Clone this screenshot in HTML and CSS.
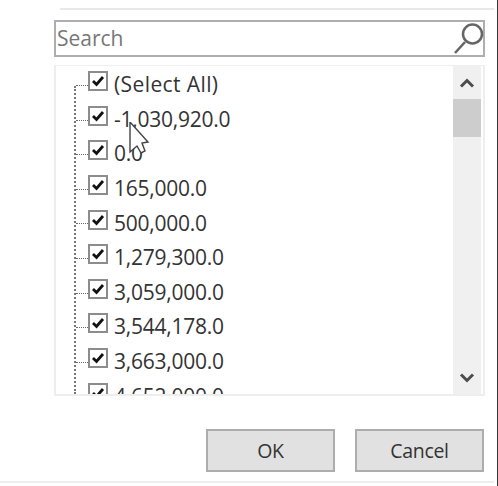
FILE: index.html
```html
<!DOCTYPE html>
<html lang="en">
<head>
    <meta charset="UTF-8">
    <title>Filter list</title>
    <link rel="stylesheet" href="styles.css">
</head>
<body>
    <div class="panel">
        <div class="top-rule"></div>

        <div class="search">
            <span class="search-text">Search</span>
            <svg class="search-icon" width="34" height="34" viewBox="0 0 34 34">
                <circle cx="22.5" cy="12" r="9.5" fill="none" stroke="#666" stroke-width="2.5"/>
                <path d="M15 20 L5 31" fill="none" stroke="#666" stroke-width="2.6"/>
            </svg>
        </div>

        <div class="list-box">
            <div class="tree">
                <div class="tree-line"></div>
                <div class="row select-all"><span class="check"><svg width="14" height="12" viewBox="0 0 14 12"><path d="M2 6 L5.5 9.5 L12 2" fill="none" stroke="#111" stroke-width="2.8"/></svg></span><span>(Select All)</span></div>
                <div class="row"><span class="check"><svg width="14" height="12" viewBox="0 0 14 12"><path d="M2 6 L5.5 9.5 L12 2" fill="none" stroke="#111" stroke-width="2.8"/></svg></span><span>-1,030,920.0</span></div>
                <div class="row"><span class="check"><svg width="14" height="12" viewBox="0 0 14 12"><path d="M2 6 L5.5 9.5 L12 2" fill="none" stroke="#111" stroke-width="2.8"/></svg></span><span>0.0</span></div>
                <div class="row"><span class="check"><svg width="14" height="12" viewBox="0 0 14 12"><path d="M2 6 L5.5 9.5 L12 2" fill="none" stroke="#111" stroke-width="2.8"/></svg></span><span>165,000.0</span></div>
                <div class="row"><span class="check"><svg width="14" height="12" viewBox="0 0 14 12"><path d="M2 6 L5.5 9.5 L12 2" fill="none" stroke="#111" stroke-width="2.8"/></svg></span><span>500,000.0</span></div>
                <div class="row"><span class="check"><svg width="14" height="12" viewBox="0 0 14 12"><path d="M2 6 L5.5 9.5 L12 2" fill="none" stroke="#111" stroke-width="2.8"/></svg></span><span>1,279,300.0</span></div>
                <div class="row"><span class="check"><svg width="14" height="12" viewBox="0 0 14 12"><path d="M2 6 L5.5 9.5 L12 2" fill="none" stroke="#111" stroke-width="2.8"/></svg></span><span>3,059,000.0</span></div>
                <div class="row"><span class="check"><svg width="14" height="12" viewBox="0 0 14 12"><path d="M2 6 L5.5 9.5 L12 2" fill="none" stroke="#111" stroke-width="2.8"/></svg></span><span>3,544,178.0</span></div>
                <div class="row"><span class="check"><svg width="14" height="12" viewBox="0 0 14 12"><path d="M2 6 L5.5 9.5 L12 2" fill="none" stroke="#111" stroke-width="2.8"/></svg></span><span>3,663,000.0</span></div>
                <div class="row"><span class="check"><svg width="14" height="12" viewBox="0 0 14 12"><path d="M2 6 L5.5 9.5 L12 2" fill="none" stroke="#111" stroke-width="2.8"/></svg></span><span>4,652,000.0</span></div>
            </div>

            <div class="scrollbar">
                <div class="arrow">
                    <svg width="16" height="10" viewBox="0 0 16 10"><path d="M2 8.5 L8 2.5 L14 8.5" fill="none" stroke="#4d4d4d" stroke-width="3"/></svg>
                </div>
                <div class="thumb"></div>
                <div class="track"></div>
                <div class="arrow">
                    <svg width="16" height="10" viewBox="0 0 16 10"><path d="M2 1.5 L8 7.5 L14 1.5" fill="none" stroke="#4d4d4d" stroke-width="3"/></svg>
                </div>
            </div>
        </div>

        <div class="buttons">
            <div class="button">OK</div>
            <div class="button">Cancel</div>
        </div>
        <div class="bottom-rule"></div>
    </div>

    <!-- mouse pointer caught in the capture -->
    <svg class="cursor" width="22" height="36" viewBox="0 0 22 36">
        <path d="M1 0 L1 30 L8 24 L12 31 L16 29 L13 21 L19 20 Z" fill="#fff" stroke="#444" stroke-width="1.4"/>
    </svg>
</body>
</html>
```

FILE: styles.css
```css
html, body {
    margin: 0;
    padding: 0;
}

body {
    width: 498px;
    height: 486px;
    overflow: hidden;
    position: relative;
    background: #fff;
    font-family: "Open Sans", "Noto Sans", sans-serif;
    color: #333;
}

.panel {
    width: 498px;
    height: 486px;
    box-sizing: border-box;
    padding: 8px 12px 0 54px;
    border-right: 1px solid #333;
    display: flex;
    flex-direction: column;
}

.top-rule {
    height: 2px;
    margin-left: 6px;
    margin-right: -9px;
    background: #e8e8e8;
}

.search {
    margin-top: 10px;
    height: 37px;
    box-sizing: border-box;
    border: 2px solid #aeaeae;
    display: flex;
    align-items: center;
    justify-content: space-between;
    padding: 0 0 0 1px;
}

.search-text {
    font-size: 21px;
    color: #777;
    margin-top: -2px;
}

.search-icon {
    margin-right: -1px;
}

.list-box {
    margin-top: 8px;
    height: 331px;
    box-sizing: border-box;
    border: 2px solid #eee;
    border-top-width: 1px;
    display: flex;
    overflow: hidden;
}

.tree {
    flex: 1;
    position: relative;
    overflow: hidden;
}

.tree-line {
    position: absolute;
    left: 18px;
    top: 20px;
    bottom: 0;
    border-left: 2px dotted #777;
}

.row {
    height: 34.6px;
    display: flex;
    align-items: center;
    font-size: 21px;
    letter-spacing: -0.25px;
    position: relative;
    top: 1px;
    padding-left: 32px;
    gap: 6px;
    white-space: nowrap;
}

.select-all {
    letter-spacing: 0.4px;
}

.row::before {
    content: "";
    position: absolute;
    left: 20px;
    top: 18px;
    width: 12px;
    border-top: 1px dotted #666;
}

.check {
    width: 20px;
    height: 20px;
    box-sizing: border-box;
    border: 2px solid #8c8c8c;
    background: #fff;
    display: flex;
    align-items: center;
    justify-content: center;
    margin-top: -6px;
}

.scrollbar {
    width: 28px;
    margin-right: 2px;
    background: #f0f0f0;
    display: flex;
    flex-direction: column;
}

.arrow {
    height: 33px;
    display: flex;
    align-items: center;
    justify-content: center;
}

.thumb {
    height: 38px;
    background: #cdcdcd;
}

.track {
    flex: 1;
}

.buttons {
    margin-top: 33px;
    display: flex;
    justify-content: flex-end;
    gap: 20px;
    padding-right: 1px;
}

.button {
    width: 129px;
    height: 43px;
    box-sizing: border-box;
    border: 2px solid #adadad;
    background: #e1e1e1;
    display: flex;
    align-items: center;
    justify-content: center;
    font-size: 19.5px;
    letter-spacing: -0.3px;
    color: #333;
}

.bottom-rule {
    height: 2px;
    margin-top: 9px;
    margin-left: -54px;
    margin-right: -9px;
    background: #eee;
}

.cursor {
    position: absolute;
    left: 129px;
    top: 122px;
}
```
